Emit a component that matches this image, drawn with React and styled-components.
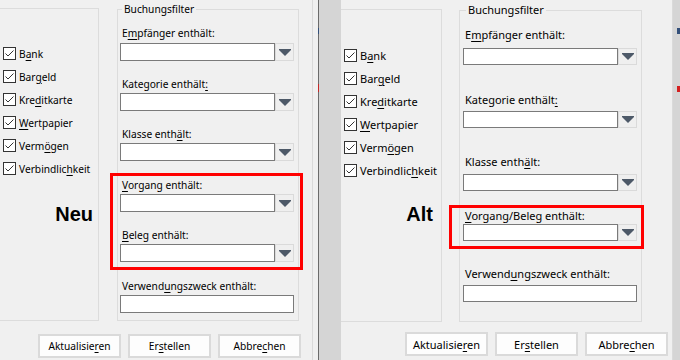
import styled, { createGlobalStyle } from "styled-components";

const GlobalStyle = createGlobalStyle`
  html, body {
    margin: 0;
    padding: 0;
  }
  body {
    background: #f0f0f0;
    font-family: "Noto Sans", "DejaVu Sans", sans-serif;
    font-size: 11px;
    color: #000;
  }
`;

// "&" marks the access key, same as in the Win32 resource strings
const Mnemonic = ({ text }) => {
  const i = text.indexOf("&");
  if (i < 0) return text;
  return (
    <>
      {text.slice(0, i)}
      <Key>{text[i + 1]}</Key>
      {text.slice(i + 2)}
    </>
  );
};

const ACCOUNTS = ["B&ank", "Bar&geld", "Kre&ditkarte", "&Wertpapier", "Verm&ögen", "Verbindlic&hkeit"];
const BUTTONS = ["Aktualisie&ren", "Er&stellen", "Abbre&chen"];

// the two screenshots were taken at slightly different text scaling
const VARIANTS = [
  {
    tag: "Neu",
    fontSize: 10.2,
    width: 312,
    top: 2,
    boxWidth: 98,
    rowsTop: 33,
    tagTop: 22,
    tagPad: 5,
    gap: 18,
    padL: 2,
    padB: 7,
    legend: 2,
    inputH: 18,
    buttonsTop: 13,
    buttonsPad: 11,
    mark: { ml: -10, pl: 7, mr: -9, pr: 6 },
    fields: [
      { label: "E&mpfänger enthält:", mt: 10, gap: 2, combo: true },
      { label: "Kategorie enthält&:", mt: 16, gap: 1, combo: true },
      { label: "Klasse enth&ält:", mt: 16, gap: 1, combo: true },
      {
        mark: true,
        mt: 12,
        pt: 2,
        pb: 5,
        fields: [
          { label: "&Vorgang enthält:", mt: 0, gap: 1, combo: true },
          { label: "&Beleg enthält:", mt: 16, gap: 1, combo: true },
        ],
      },
      { label: "Verwend&ungszweck enthält:", mt: 9, gap: 1 },
    ],
  },
  {
    tag: "Alt",
    fontSize: 11,
    width: 331,
    top: 3,
    boxWidth: 100,
    rowsTop: 34,
    tagTop: 20,
    tagPad: 8,
    gap: 17,
    padL: 3,
    padB: 19,
    legend: 3,
    inputH: 17,
    buttonsTop: 10,
    buttonsPad: 4,
    mark: { ml: -14, pl: 11, mr: -7, pr: 4 },
    fields: [
      { label: "E&mpfänger enthält:", mt: 10, gap: 6, combo: true },
      { label: "Kategorie enthält&:", mt: 27, gap: 4, combo: true },
      { label: "Klasse enth&ält:", mt: 26, gap: 5, combo: true },
      {
        mark: true,
        mt: 14,
        pt: 0,
        pb: 5,
        fields: [{ label: "&Vorgang/Beleg enthält:", mt: 0, gap: 1, combo: true }],
      },
      { label: "Verwend&ungszweck enthält:", mt: 17, gap: 4 },
    ],
  },
];

const CheckIcon = () => (
  <svg width="13" height="13" viewBox="0 0 13 13">
    <rect x="0.5" y="0.5" width="12" height="12" fill="#fff" stroke="#333" />
    <path d="M2.5 6.5 L5 9 L10.5 3.5" fill="none" stroke="#333" strokeWidth="1" />
  </svg>
);

const Arrow = () => (
  <svg width="12" height="7" viewBox="0 0 12 7">
    <path d="M0 0 H12 V1 L6 7 L0 1 Z" fill="#4d5968" />
  </svg>
);

const Field = ({ f, v }) => (
  <FieldWrap $mt={f.mt}>
    <FieldLabel $gap={f.gap}>
      <Mnemonic text={f.label} />
    </FieldLabel>
    <ComboRow>
      <TextBox $h={v.inputH} />
      {f.combo && (
        <DropButton $h={v.inputH}>
          <Arrow />
        </DropButton>
      )}
    </ComboRow>
  </FieldWrap>
);

const FilterDialog = ({ v }) => (
  <Dialog $width={v.width} $top={v.top} $fontSize={v.fontSize}>
    <Body $gap={v.gap}>
      <AccountBox $width={v.boxWidth} $rowsTop={v.rowsTop}>
        {ACCOUNTS.map((a) => (
          <CheckRow key={a}>
            <CheckIcon />
            <span>
              <Mnemonic text={a} />
            </span>
          </CheckRow>
        ))}
        <Tag $mt={v.tagTop} $pad={v.tagPad}>
          {v.tag}
        </Tag>
      </AccountBox>

      <FilterBox $padL={v.padL} $padB={v.padB}>
        <Legend $indent={v.legend}>Buchungsfilter</Legend>
        {v.fields.map((f, i) =>
          f.mark ? (
            <Highlight key={i} $mt={f.mt} $pt={f.pt} $pb={f.pb} {...prefix(v.mark)}>
              {f.fields.map((g) => (
                <Field key={g.label} f={g} v={v} />
              ))}
            </Highlight>
          ) : (
            <Field key={f.label} f={f} v={v} />
          )
        )}
      </FilterBox>
    </Body>

    <ButtonBar $mt={v.buttonsTop} $pad={v.buttonsPad}>
      {BUTTONS.map((b) => (
        <PushButton key={b}>
          <Mnemonic text={b} />
        </PushButton>
      ))}
    </ButtonBar>
  </Dialog>
);

const prefix = (o) => Object.fromEntries(Object.entries(o).map(([k, val]) => ["$" + k, val]));

export default function App() {
  return (
    <>
      <GlobalStyle />
      <Page>
        <FilterDialog v={VARIANTS[0]} />
        <Gutter $w={5} />
        <Seam />
        <Gutter $w={22} $dark />
        <FilterDialog v={VARIANTS[1]} />
        <Backdrop />
      </Page>
    </>
  );
}

const Page = styled.div`
  width: 680px;
  height: 360px;
  display: flex;
  overflow: hidden;
  background: #f0f0f0;
`;

const Dialog = styled.div`
  box-sizing: content-box;
  flex: none;
  width: ${(p) => p.$width}px;
  padding-top: ${(p) => p.$top}px;
  border-right: 1px solid #dadada;
  display: flex;
  flex-direction: column;
  font-size: ${(p) => p.$fontSize}px;
`;

const Gutter = styled.div`
  flex: none;
  width: ${(p) => p.$w}px;
  background: ${(p) => (p.$dark ? "#d5d5d5" : "#f0f0f0")};
`;

const Seam = styled.div`
  flex: none;
  width: 1px;
  background: linear-gradient(
    to bottom,
    #6b6b6b 0 28px,
    #34507a 28px 34px,
    #6b6b6b 34px 84px,
    #c62828 84px 92px,
    #6b6b6b 92px
  );
`;

const Backdrop = styled.div`
  flex: 1;
  background:
    linear-gradient(#34507a, #34507a) right 28px / 3px 6px no-repeat,
    linear-gradient(#d42020, #d42020) right 86px / 3px 6px no-repeat,
    #d5d5d5;
`;

const Body = styled.div`
  display: flex;
  gap: ${(p) => p.$gap}px;
`;

const AccountBox = styled.div`
  flex: none;
  width: ${(p) => p.$width}px;
  margin-top: 6px;
  padding-top: ${(p) => p.$rowsTop}px;
  border: 1px solid #dcdcdc;
  border-left: none;
  display: flex;
  flex-direction: column;
`;

const CheckRow = styled.div`
  height: 23px;
  display: flex;
  align-items: center;
  gap: 3px;
  padding-left: 3px;
  white-space: nowrap;

  svg {
    flex: none;
  }
`;

const Tag = styled.div`
  margin-top: ${(p) => p.$mt}px;
  padding-right: ${(p) => p.$pad}px;
  text-align: right;
  font-family: "Liberation Sans", Arial, sans-serif;
  font-weight: bold;
  font-size: 20px;
  line-height: 24px;
`;

const FilterBox = styled.fieldset`
  flex: none;
  width: 174px;
  min-width: 0;
  margin: 0;
  padding: 0 4px ${(p) => p.$padB}px ${(p) => p.$padL}px;
  border: 1px solid #dcdcdc;
`;

const Legend = styled.legend`
  margin-left: ${(p) => p.$indent}px;
  padding: 0 2px;
  line-height: 14px;
`;

const FieldWrap = styled.div`
  margin-top: ${(p) => p.$mt}px;
`;

const FieldLabel = styled.div`
  height: 15px;
  line-height: 15px;
  margin-bottom: ${(p) => p.$gap}px;
  padding-left: 2px;
  white-space: nowrap;
`;

const ComboRow = styled.div`
  display: flex;
`;

const TextBox = styled.div`
  box-sizing: border-box;
  flex: 1;
  height: ${(p) => p.$h}px;
  background: #fff;
  border: 1px solid #7a7a7a;
`;

const DropButton = styled.div`
  box-sizing: border-box;
  flex: none;
  width: 19px;
  height: ${(p) => p.$h}px;
  border: 1px solid #dadada;
  background: #efefef;
  display: flex;
  align-items: center;
  justify-content: center;
`;

const Highlight = styled.div`
  margin: ${(p) => p.$mt}px ${(p) => p.$mr}px 0 ${(p) => p.$ml}px;
  padding: ${(p) => p.$pt}px ${(p) => p.$pr}px ${(p) => p.$pb}px ${(p) => p.$pl}px;
  border: 3px solid #ff0000;
`;

const ButtonBar = styled.div`
  margin-top: ${(p) => p.$mt}px;
  padding-right: ${(p) => p.$pad}px;
  display: flex;
  justify-content: flex-end;
  gap: 7px;
`;

const PushButton = styled.button`
  box-sizing: border-box;
  width: 83px;
  height: 24px;
  padding: 0;
  font: inherit;
  color: #000;
  background: #fdfdfd;
  border: 2px solid #dadada;
  border-radius: 0;
`;

const Key = styled.span`
  text-decoration: underline;
  text-underline-offset: 2px;
`;
